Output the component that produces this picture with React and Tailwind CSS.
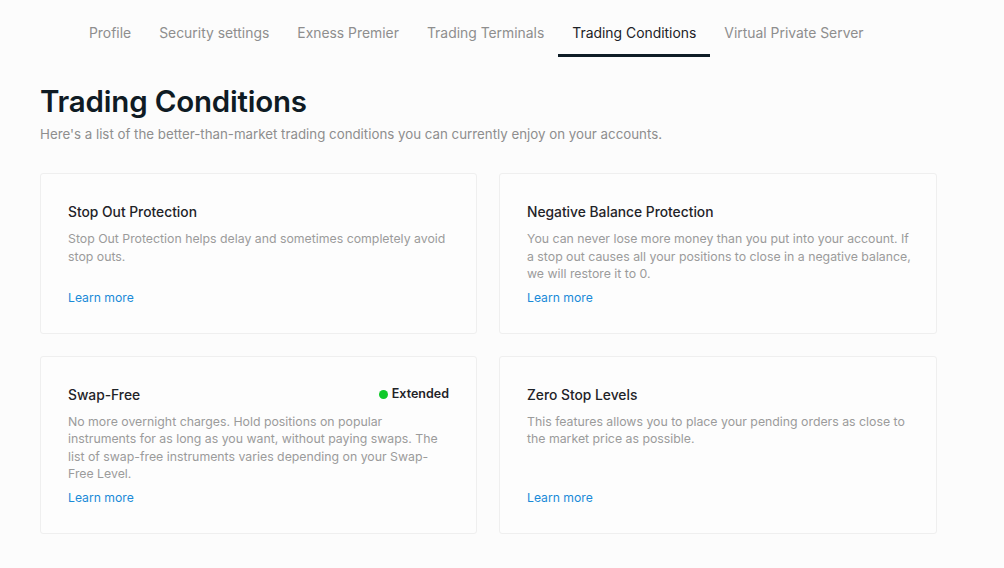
import React from "react";

const tabs = [
  "Profile",
  "Security settings",
  "Exness Premier",
  "Trading Terminals",
  "Trading Conditions",
  "Virtual Private Server",
];

const cards = [
  {
    title: "Stop Out Protection",
    desc: "Stop Out Protection helps delay and sometimes completely avoid stop outs.",
  },
  {
    title: "Negative Balance Protection",
    desc: "You can never lose more money than you put into your account. If a stop out causes all your positions to close in a negative balance, we will restore it to 0.",
  },
  {
    title: "Swap-Free",
    badge: "Extended",
    desc: "No more overnight charges. Hold positions on popular instruments for as long as you want, without paying swaps. The list of swap-free instruments varies depending on your Swap-Free Level.",
  },
  {
    title: "Zero Stop Levels",
    desc: "This features allows you to place your pending orders as close to the market price as possible.",
  },
];

export default function App() {
  return (
    <div
      className="min-h-[568px] w-[1004px] bg-[#fcfcfc] text-[#1f2328]"
      style={{ fontFamily: "Inter, 'Noto Sans', sans-serif" }}
    >
      <nav className="flex pl-[75px]">
        {tabs.map((t) => {
          const active = t === "Trading Conditions";
          return (
            <div
              key={t}
              className={
                active
                  ? "px-[14px] pt-[23px] pb-[11px] border-b-[3px] border-[#0e1c26] text-[13.9px] leading-[20px] text-[#1d2227]"
                  : "px-[14px] pt-[23px] pb-[11px] border-b-[3px] border-transparent text-[13.9px] leading-[20px] text-[#8e8e8e]"
              }
            >
              {t}
            </div>
          );
        })}
      </nav>

      <main className="px-[40px]">
        <h1 className="mt-[26px] text-[29.5px] leading-[36px] font-semibold text-[#0f1b24] tracking-[-0.2px]">
          Trading Conditions
        </h1>
        <p className="mt-[5px] text-[13.3px] leading-[20px] text-[#8e8e8e]">
          Here's a list of the better-than-market trading conditions you can currently enjoy on your accounts.
        </p>

        <div className="mt-[29px] grid w-[898px] grid-cols-[437px_438px] gap-[22px]">
          {cards.map((c, i) => (
            <div
              key={c.title}
              className={
                i % 2 === 0
                  ? "flex flex-col rounded-[3px] border border-[#efefef] bg-[#fdfdfd] pl-[27px] pr-[27px] pt-[28px] pb-[26px]"
                  : "flex flex-col rounded-[3px] border border-[#efefef] bg-[#fdfdfd] pl-[27px] pr-[21px] pt-[28px] pb-[26px]"
              }
            >
              <div className="flex items-center justify-between">
                <h2 className="text-[13.8px] leading-[20px] font-medium text-[#1f2328]">
                  {c.title}
                </h2>
                {c.badge && (
                  <div className="flex items-center gap-[4px] text-[12.5px] font-semibold text-[#1f2328]">
                    <span className="inline-block h-[9px] w-[9px] rounded-full bg-[#10c92a]" />
                    {c.badge}
                  </div>
                )}
              </div>
              <p
                className={
                  i % 2 === 0
                    ? "mt-[8px] max-w-[380px] text-[12.3px] leading-[17.5px] text-[#9b9b9b]"
                    : "mt-[8px] text-[12.3px] leading-[17.5px] text-[#9b9b9b]"
                }
              >
                {c.desc}
              </p>
              <a className="mt-auto pt-[6px] text-[12.2px] leading-[18px] text-[#1a8ad8]">
                Learn more
              </a>
            </div>
          ))}
        </div>
      </main>
    </div>
  );
}
